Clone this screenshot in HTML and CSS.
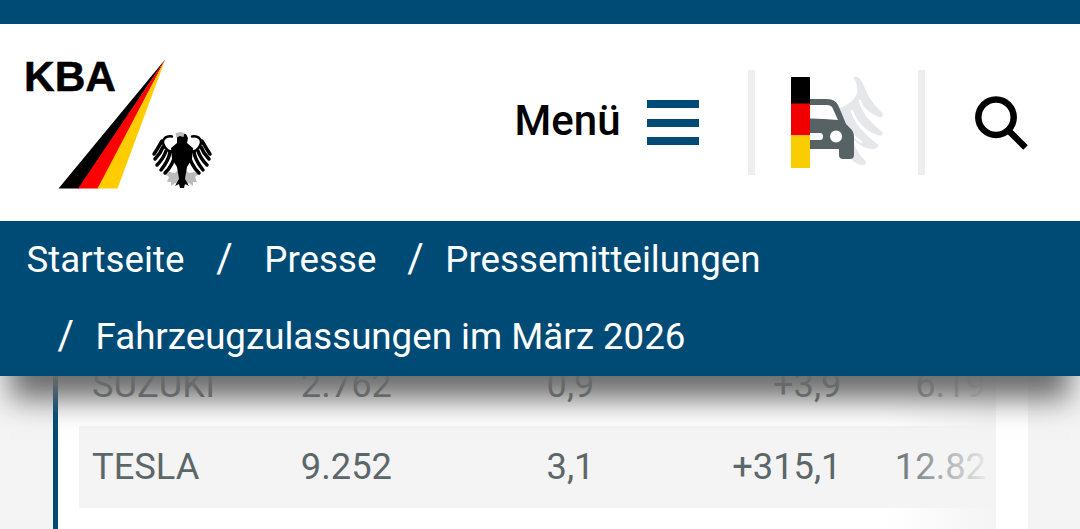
FILE: index.html
```
<!DOCTYPE html>
<html lang="de">
<head>
    <meta charset="UTF-8">
    <meta name="viewport" content="width=device-width, initial-scale=1.0">
    <title>KBA - Fahrzeugzulassungen im März 2026</title>
    <link rel="stylesheet" href="styles.css">
</head>
<body>
    <header class="header">
        <div class="topbar">
            <svg class="logo" width="190" height="140" viewBox="0 0 190 140">
                <text class="logo-text" x="-2" y="39.500" textLength="92" lengthAdjust="spacingAndGlyphs">KBA</text>
                <path fill="#000" d="M139.500 8 32.500 137.500H53z"/>
                <path fill="#f00" d="M139.500 8 52 137.500H72.500z"/>
                <path fill="#fc0" d="M139.500 8 71.500 137.500H91.500z"/>
                <!-- federal eagle -->
                <g id="eagle">
                    <g fill="#bbb">
                        <path d="M152 119l-3 3-6-1-4 2 4 3-2 5 4 0 0 4 4-3 5 2-1-6z"/>
                        <path d="M160 119l3 3 6-1 4 2-4 3 2 5-4 0 0 4-4-3-5 2 1-6z"/>
                    </g>
                    <path fill="#000" d="M151 84l3-2 6 1 2 4-1 5 6 5-1 11-5 8-2 12 4 7-4-2-1 4h-4l-1-4-4 2 4-7-2-12-5-8-1-11 6-5z"/>
                    <path fill="#bbb" d="M149.500 82l5-1 4 1-1 4-4-1-3 2z"/>
                    <g fill="none" stroke="#000" stroke-linecap="round">
                        <path stroke-width="2.500" d="M146 85.500c-7-1-11 4-8 9 2 5 7 7 13 6M166 85.500c7-1 11 4 8 9-2 5-7 7-13 6"/>
                        <path stroke-width="3.500" d="M136 90c-3 5-5 9-8 13M137 96c-2 5-4 8-8 12M140 100c-2 6-5 10-9 14M144 101c-1 7-5 13-9 18M149 103c-1 7-5 14-10 19"/>
                        <path stroke-width="3.500" d="M176 90c3 5 5 9 8 13M175 96c2 5 4 8 8 12M172 100c2 6 5 10 9 14M168 101c1 7 5 13 9 18M163 103c1 7 5 14 10 19"/>
                    </g>
                </g>
            </svg>

            <nav class="tools">
                <a class="menu">
                    <span class="menu-label">Menü</span>
                    <span class="burger"><i></i><i></i><i></i></span>
                </a>
                <a class="portal">
                    <svg width="110" height="105" viewBox="0 0 110 105">
                        <g fill="#e6e7eb">
                            <path d="M73.500 7c6-1 8 4 10 8 4 10 9 19 19 28 1 3-1 5-4 4-7-3-12-7-16-12 3 11 9 19 20 27 1 3-2 4-5 3-9-3-16-9-21-16 4 10 11 18 21 25 3 3-2 5-6 5-8-1-14-5-19-11 2 9 6 16 13 23 2 3-1 4-4 4-7-1-12-7-15-14L60 38c8-3 15-8 17-15 1-6-1-11-3.500-16z"/>
                        </g>
                        <path fill="none" stroke="#fff" stroke-width="2.500" stroke-linecap="round" d="M80 31c2 7 5 12 9 17M72 41c3 9 8 16 14 21M69 58c3 6 7 11 12 14"/>
                        <path fill="#566263" fill-rule="evenodd" d="M30 29h16c8 0 11 3 13 8l7 17 4 4c3 3 4 5 4 9v18q0 4-4 4H63q-4 0-4-4v-6H30zM30 35v13.500q14 0 28 1.500l-5-11c-1-3-3-4-6-4zM30 63v7h10q3 0 3-3.500t-3-3.500zM56 60.500a6 6 0 1 0 .1 0z"/>
                        <path fill="#000" d="M11 7h19v27H11z"/>
                        <path fill="#f00000" d="M11 33.500h19v32H11z"/>
                        <path fill="#f9cd00" d="M11 65.300h19V98H11z"/>
                    </svg>
                </a>
                <a class="search">
                    <svg width="60" height="60" viewBox="0 0 60 60" fill="none" stroke="#000" stroke-width="6.500">
                        <circle cx="26" cy="25.300" r="17.700"/>
                        <path d="M39 39 55.500 55.500"/>
                    </svg>
                </a>
            </nav>
        </div>

        <ol class="breadcrumb">
            <li>Startseite</li>
            <li><span class="slash">/</span>Presse</li>
            <li><span class="slash">/</span>Pressemitteilungen</li>
            <li class="current"><span class="slash">/</span>Fahrzeugzulassungen im März 2026</li>
        </ol>
    </header>

    <main class="content">
        <div class="table-scroll">
            <table>
                <tbody>
                    <tr>
                        <td class="brand">SUZUKI</td>
                        <td class="count">2.762</td>
                        <td class="share">0,9</td>
                        <td class="change">+3,9</td>
                        <td class="total">6.19</td>
                    </tr>
                    <tr class="odd">
                        <td class="brand">TESLA</td>
                        <td class="count">9.252</td>
                        <td class="share">3,1</td>
                        <td class="change">+315,1</td>
                        <td class="total">12.82</td>
                    </tr>
                </tbody>
            </table>
        </div>
    </main>
</body>
</html>
```
FILE: styles.css
```
* {
    box-sizing: border-box;
}

body {
    font-family: Roboto, 'Liberation Sans', sans-serif;
    font-size: 36.3px;
    color: #5b6769;
    background-color: #f4f4f4;
    margin: 0;
}

.header {
    position: relative;
    z-index: 1;
    height: 375.5px;
    border-top: 24px solid #004b76;
    background-color: #004b76;
    box-shadow: 0 33px 28px -10px #6b6b6b;
}

.topbar {
    display: flex;
    justify-content: space-between;
    height: 197px;
    padding: 27px 0 0 26px;
    background-color: #fff;
}

.logo {
    overflow: visible;
}

.logo-text {
    font: bold 42px 'Liberation Sans', Arial, sans-serif;
    stroke: #000;
    stroke-width: 0.5px;
}

.tools {
    display: flex;
    height: 105px;
    margin-top: 19px;
}

.menu {
    display: flex;
    align-items: center;
    gap: 26.5px;
    padding-right: 49px;
    color: #000;
}

.menu-label {
    font-size: 42px;
    font-weight: 500;
    line-height: 50px;
    margin-top: -3px;
}

.burger {
    display: flex;
    flex-direction: column;
    gap: 10.5px;
    width: 52px;
}

.burger i {
    height: 8px;
    background-color: #004b76;
}

.portal {
    width: 177px;
    border-left: 7px solid #eee;
    border-right: 7px solid #eee;
    padding-left: 25px;
}

.search {
    width: 155px;
    padding: 22px 0 0 45px;
}

.portal svg,
.search svg {
    display: block;
}

.breadcrumb {
    display: flex;
    flex-wrap: wrap;
    margin: 0;
    padding: 0 26.5px;
    list-style: none;
    color: #fff;
    font-size: 36.7px;
    line-height: 77px;
}

.slash {
    display: inline-block;
    width: 80px;
    padding-left: 32px;
    font-size: 40px;
    line-height: 1;
}

.breadcrumb li:nth-child(3) .slash {
    width: 69px;
    padding-left: 31px;
}

.current {
    width: 100%;
}

.current .slash {
    width: 69px;
    padding-left: 31px;
}

.content {
    width: 975px;
    height: 185px;
    margin: -32px 0 0 53px;
    padding-left: 21px;
    border-left: 5px solid #004b76;
    background-color: #fff;
}

.table-scroll {
    position: relative;
    width: 917px;
    height: 185px;
    overflow: hidden;
}

.table-scroll::after {
    content: '';
    position: absolute;
    top: 0;
    right: 0;
    width: 110px;
    height: 100%;
    background: linear-gradient(to right, rgba(244, 244, 244, 0), #f4f4f4);
}

table {
    width: 100%;
    table-layout: fixed;
    border-collapse: collapse;
}

td {
    height: 82px;
    padding: 0;
    text-align: right;
}

.odd {
    background-color: #f4f4f4;
}

.brand {
    width: 150px;
    padding-left: 13px;
    text-align: left;
}

.count {
    width: 163px;
}

.share {
    width: 202.5px;
}

.change {
    width: 247px;
}

.total {
    padding-right: 10px;
}
```
